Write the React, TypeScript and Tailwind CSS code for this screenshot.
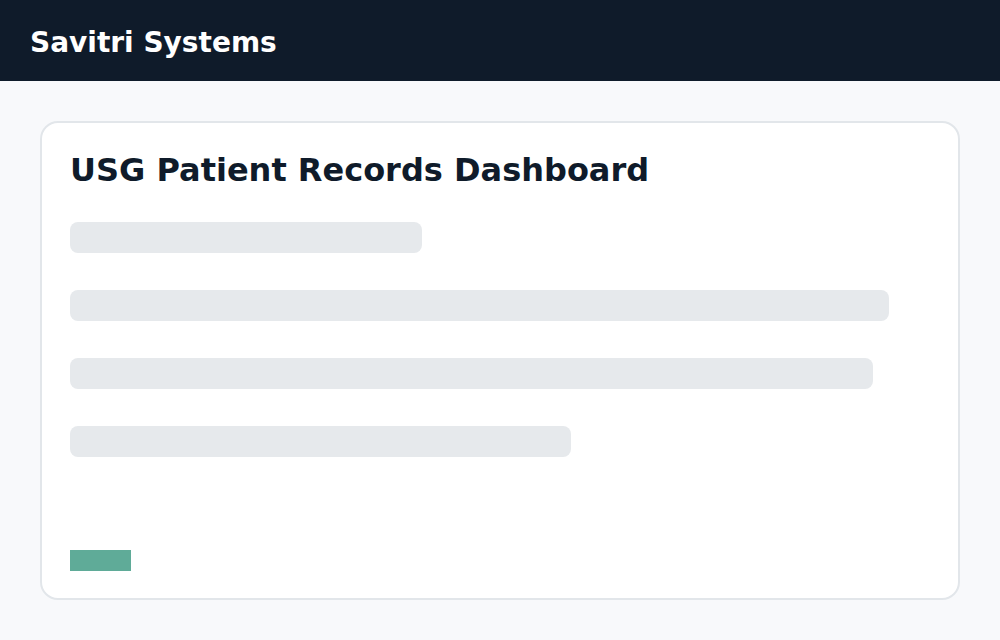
const bars = [352, 819, 803, 501];

export default function App() {
  return (
    <div className="min-h-[640px] bg-[#f8f9fb] font-['DejaVu_Sans',sans-serif]">
      <header className="flex h-[81px] items-center bg-[#0f1b2a] px-[30px] pt-1">
        <h1 className="text-[28px] font-bold leading-9 text-white">Savitri Systems</h1>
      </header>
      <main className="px-10 py-10">
        <section className="flex h-[479px] flex-col rounded-[18px] border-2 border-[#e2e6ea] bg-white px-[28px] pt-[27px]">
          <h2 className="text-[32px] font-bold leading-[40px] text-[#0f1b2a]">USG Patient Records Dashboard</h2>
          <div className="mt-[32px] flex flex-col gap-[37px]">
            {bars.map((w, i) => (
              <div key={i} className="h-[31px] rounded-lg bg-[#e6e9ec]" style={{ width: w }} />
            ))}
          </div>
          <div className="mt-[93px] h-[21px] w-[61px] bg-[#5fab98]" />
        </section>
      </main>
    </div>
  );
}
